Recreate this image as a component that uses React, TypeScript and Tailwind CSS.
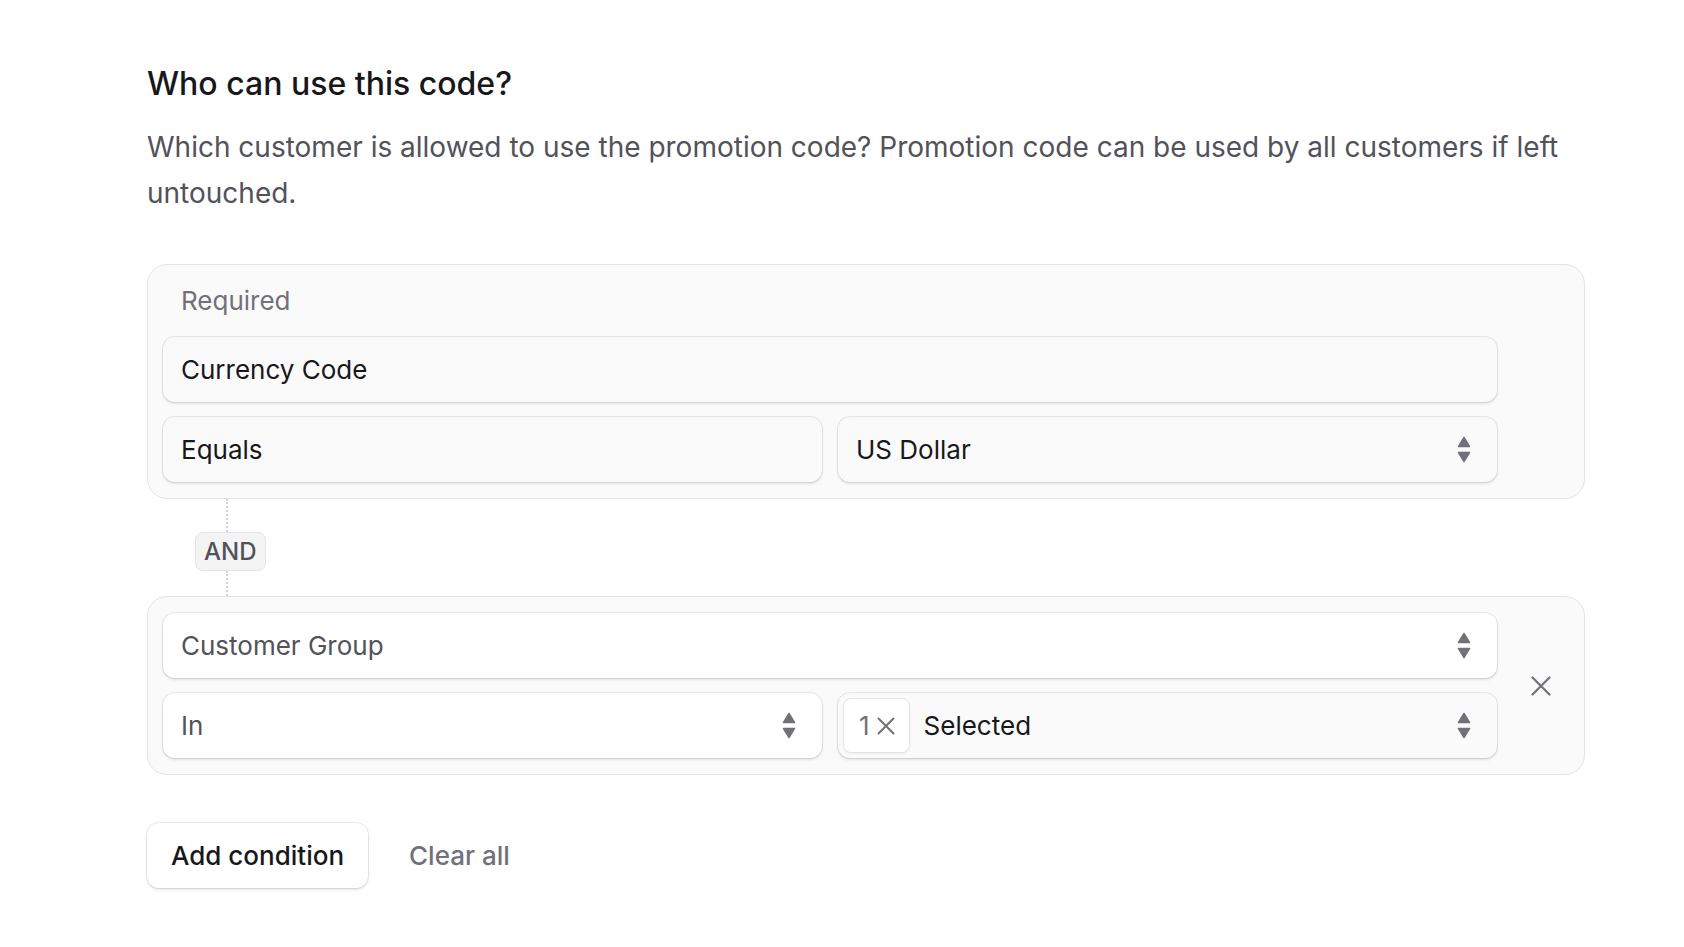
const inputShadow = "shadow-[0_0_0_1px_rgba(0,0,0,0.08),0_2px_3px_0_rgba(0,0,0,0.1)]";

function UpDown() {
  return (
    <svg width="14" height="27" viewBox="0 0 14 27" className="shrink-0 text-[#71717a]" fill="currentColor">
      <path d="M7 1.5 L12.5 10.5 H1.5 Z" stroke="currentColor" strokeWidth="1.5" strokeLinejoin="round" />
      <path d="M7 25.5 L12.5 16.5 H1.5 Z" stroke="currentColor" strokeWidth="1.5" strokeLinejoin="round" />
    </svg>
  );
}

function Cross({ size, stroke = 2.2 }: { size: number; stroke?: number }) {
  return (
    <svg width={size} height={size} viewBox={`0 0 ${size} ${size}`} className="shrink-0 text-[#71717a]" fill="none">
      <path
        d={`M1.5 1.5 L${size - 1.5} ${size - 1.5} M${size - 1.5} 1.5 L1.5 ${size - 1.5}`}
        stroke="currentColor"
        strokeWidth={stroke}
        strokeLinecap="round"
      />
    </svg>
  );
}

function Field({
  children,
  white,
  subtle,
  select,
  tight,
}: {
  children: React.ReactNode;
  white?: boolean;
  subtle?: boolean;
  select?: boolean;
  tight?: boolean;
}) {
  return (
    <div
      className={`flex h-[65px] items-center rounded-[12px] pr-[26px] text-[26px] ${inputShadow} ${
        tight ? "pl-[5px]" : "pl-[18px]"
      } ${white ? "bg-white" : "bg-[#fafafa]"} ${subtle ? "text-[#52525b]" : "text-[#18181b]"}`}
    >
      <div className="flex flex-1 items-center">{children}</div>
      {select && <UpDown />}
    </div>
  );
}

export default function App() {
  return (
    <div className="min-h-screen w-full bg-white font-['Inter','Noto_Sans',sans-serif] antialiased">
      <section className="ml-[147px] w-[1438px] pt-[64px]">
        <h2 className="text-[32px] font-medium leading-[40px] text-[#18181b]">Who can use this code?</h2>
        <p className="mt-[20px] text-[28px] leading-[46px] text-[#52525b]">
          Which customer is allowed to use the promotion code? Promotion code can be used by all customers if left
          untouched.
        </p>

        <div className="mt-[48px] rounded-[20px] border border-[#e4e4e7] bg-[#fafafa] py-[16px] pl-[15px] pr-[87px]">
          <div className="px-[18px] text-[26px] leading-[40px] text-[#71717a]">Required</div>
          <div className="mt-[16px] flex flex-col gap-[15px]">
            <Field>Currency Code</Field>
            <div className="grid grid-cols-2 gap-[16px]">
              <Field>Equals</Field>
              <Field select>US Dollar</Field>
            </div>
          </div>
        </div>

        <div className="flex flex-col items-start pl-[48px]">
          <div className="ml-[31px] h-[33px] border-l-2 border-dotted border-[#d4d4d8]" />
          <span className="flex h-[39px] items-center rounded-[8px] border border-[#e4e4e7] bg-[#f4f4f5] px-[8px] text-[24px] font-medium text-[#52525b]">
            AND
          </span>
          <div className="ml-[31px] h-[25px] border-l-2 border-dotted border-[#d4d4d8]" />
        </div>

        <div className="flex items-center rounded-[20px] border border-[#e4e4e7] bg-[#fafafa] py-[16px] pl-[15px]">
          <div className="flex flex-1 flex-col gap-[15px]">
            <Field white subtle select>
              Customer Group
            </Field>
            <div className="grid grid-cols-2 gap-[16px]">
              <Field white subtle select>
                In
              </Field>
              <Field select tight>
                <span className="flex h-[55px] items-center gap-[7px] rounded-[8px] border border-[#e4e4e7] bg-white pl-[15px] pr-[14px] text-[#71717a] shadow-[0_1px_2px_rgba(0,0,0,0.06)]">
                  1
                  <Cross size={18} stroke={2} />
                </span>
                <span className="ml-[14px]">Selected</span>
              </Field>
            </div>
          </div>
          <div className="flex w-[87px] justify-center">
            <Cross size={20} />
          </div>
        </div>

        <div className="mt-[48px] flex items-center">
          <button
            className={`h-[65px] rounded-[12px] bg-white px-[24px] text-[26px] font-medium text-[#18181b] ${inputShadow}`}
          >
            Add condition
          </button>
          <button className="ml-[41px] text-[26px] font-medium text-[#71717a]">Clear all</button>
        </div>
      </section>
    </div>
  );
}
